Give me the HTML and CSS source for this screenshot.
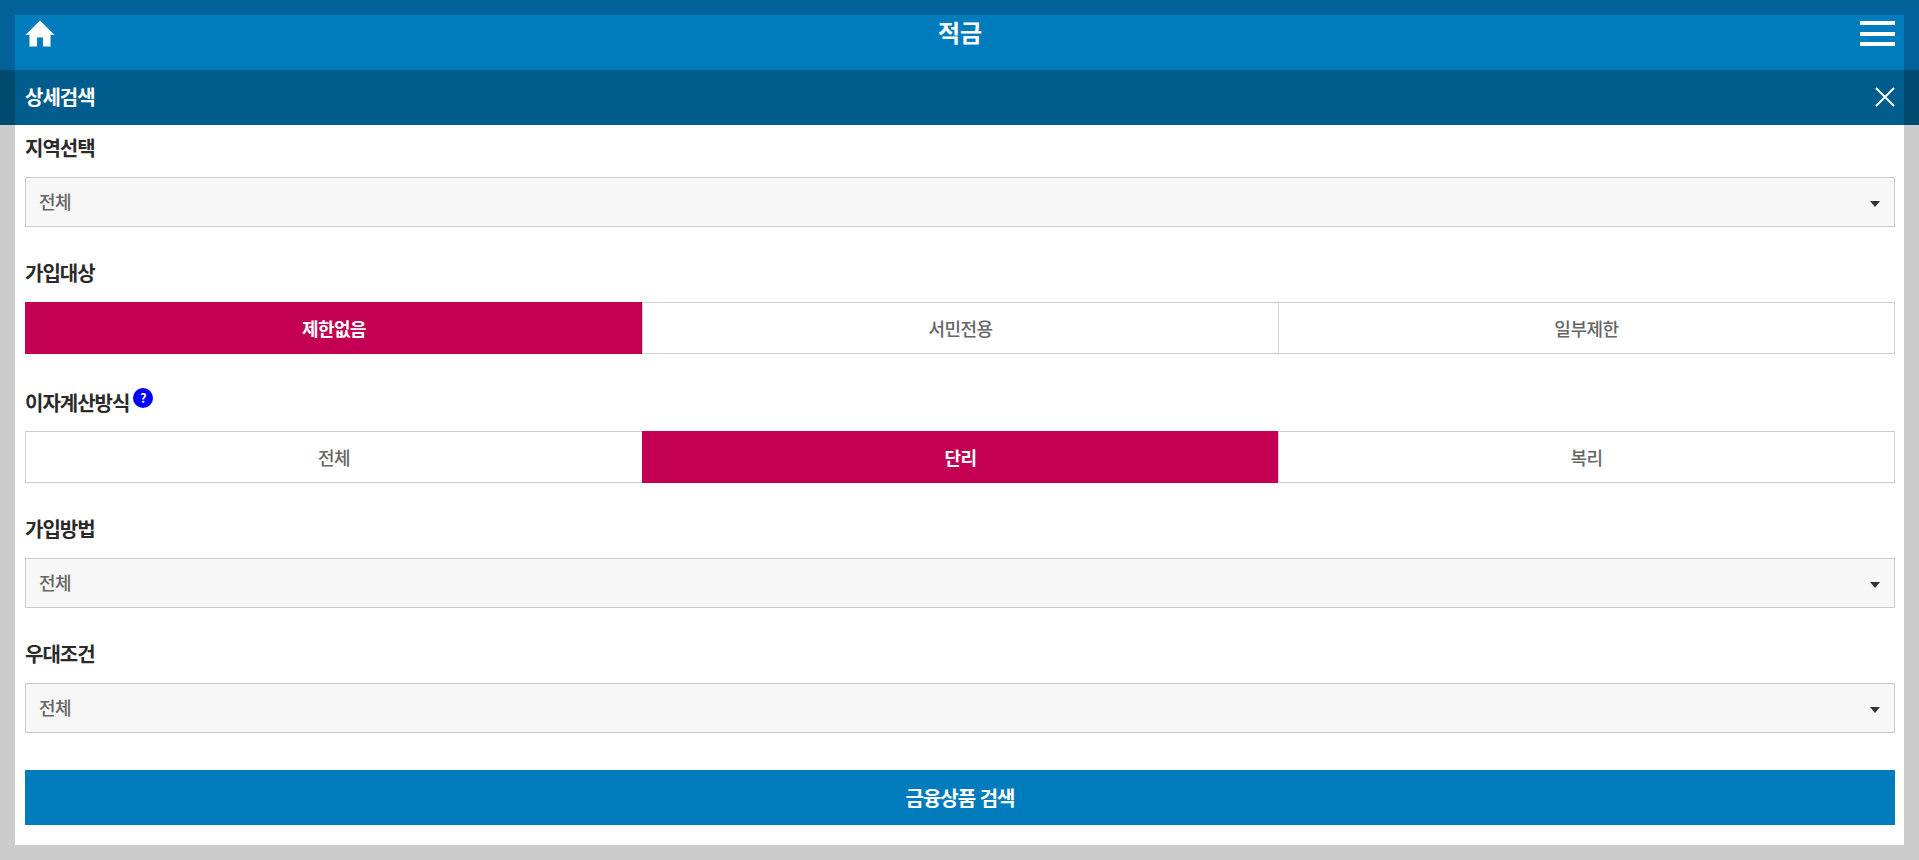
FILE: index.html
```html
<!DOCTYPE html>
<html lang="ko">
<head>
  <meta charset="UTF-8" />
  <meta name="viewport" content="width=device-width, initial-scale=1.0"/>
  <title>적금</title>
  <link rel="stylesheet" href="styles.css">
</head>
<body>

  <!-- HEADER -->
  <div class="top-wrap">
    <div class="top-bar">
      <a href="#" class="home-link" aria-label="홈">
        <svg width="30" height="27" viewBox="0 0 30 27"><path d="M15 0.5L29.5 15H25.5V26.5H18V17.5H12V26.5H4.500V15H0.500Z" fill="#fff"/></svg>
      </a>
      <h1>적금</h1>
      <a href="#" class="menu-link" aria-label="메뉴"><span></span><span></span><span></span></a>
    </div>
  </div>

  <div class="sub-wrap">
    <div class="sub-bar">
      <h2>상세검색</h2>
      <a href="#" class="close-link" aria-label="닫기">
        <svg width="20" height="20" viewBox="0 0 20 20"><path d="M1 1L19 19M19 1L1 19" stroke="#fff" stroke-width="2" fill="none"/></svg>
      </a>
    </div>
  </div>

  <!-- SEARCH FORM -->
  <div class="panel">
    <div class="field">
      <div class="field-title">지역선택</div>
      <div class="select-box"><select><option>전체</option></select></div>
    </div>

    <div class="field">
      <div class="field-title">가입대상</div>
      <div class="toggle">
        <button class="on">제한없음</button>
        <button>서민전용</button>
        <button>일부제한</button>
      </div>
    </div>

    <div class="field">
      <div class="field-title has-help">이자계산방식<span class="help">?</span></div>
      <div class="toggle">
        <button>전체</button>
        <button class="on">단리</button>
        <button>복리</button>
      </div>
    </div>

    <div class="field">
      <div class="field-title">가입방법</div>
      <div class="select-box"><select><option>전체</option></select></div>
    </div>

    <div class="field">
      <div class="field-title">우대조건</div>
      <div class="select-box"><select><option>전체</option></select></div>
    </div>

    <button class="search-btn">금융상품 검색</button>
  </div>

</body>
</html>
```

FILE: styles.css
```css
* {
  box-sizing: border-box;
}

html, body {
  height: 860px;
  overflow: hidden;
}

body {
  margin: 0;
  background: #cccccc;
  font-family: "Noto Sans CJK KR", "Noto Sans", sans-serif;
  color: #222;
}

a {
  color: #fff;
}

/* Header */
.top-wrap {
  background: #006299;
  padding: 15px 15px 0;
}

.top-bar {
  height: 55px;
  background: #007cbd;
  padding: 5px 9px 0 10px;
  display: flex;
  justify-content: space-between;
  align-items: flex-start;
}

.top-bar h1 {
  margin: -1px 0 0;
  font-size: 24px;
  line-height: 26px;
  font-weight: 700;
  color: #fff;
  flex: 1;
  text-align: center;
}

.home-link {
  display: block;
  height: 27px;
  width: 35px;
}

.menu-link {
  display: flex;
  flex-direction: column;
  gap: 6.500px;
  width: 35px;
  margin-top: 1px;
}

.menu-link span {
  display: block;
  height: 4px;
  background: #fff;
}

.sub-wrap {
  background: #004a70;
  padding: 0 15px;
}

.sub-bar {
  height: 55px;
  background: #005c8c;
  padding: 0 9px 2px 10px;
  display: flex;
  justify-content: space-between;
  align-items: center;
}

.sub-bar h2 {
  margin: 0;
  font-size: 20px;
  line-height: 26px;
  font-weight: 700;
  letter-spacing: -1px;
  color: #fff;
}

.close-link {
  display: block;
  height: 20px;
  margin-top: 1px;
}

/* Form */
.panel {
  margin: 0 15px;
  height: 720px;
  background: #fff;
  padding: 11px 9px 20px 10px;
}

.field {
  margin-bottom: 34px;
}

.field-title {
  font-size: 20px;
  line-height: 24px;
  font-weight: 700;
  letter-spacing: -1px;
  color: #2a2a2a;
  margin-bottom: 17px;
}

.has-help {
  height: 26px;
  margin-bottom: 17px;
}

.help {
  display: inline-block;
  width: 20px;
  height: 20px;
  margin-left: 4px;
  border-radius: 50%;
  background: #0000ff;
  color: #fff;
  font-size: 13px;
  line-height: 20px;
  font-weight: 700;
  text-align: center;
  letter-spacing: 0;
  vertical-align: 8px;
}

.select-box {
  position: relative;
}

.select-box::after {
  content: "";
  position: absolute;
  right: 15px;
  top: 24px;
  border-top: 6px solid #333;
  border-left: 5.500px solid transparent;
  border-right: 5.500px solid transparent;
}

.select-box select {
  display: block;
  width: 100%;
  height: 50px;
  padding: 0 13px 2px;
  border: 1px solid #cccccc;
  border-radius: 0;
  background: #f7f7f7;
  font-family: inherit;
  font-size: 18px;
  font-weight: 500;
  color: #666;
  letter-spacing: -0.5px;
  appearance: none;
}

.toggle {
  display: grid;
  grid-template-columns: 33% 1fr 33%;
}

.toggle button {
  height: 52px;
  padding: 0;
  border: 1px solid #cccccc;
  border-right: 0;
  background: #fff;
  font-family: inherit;
  font-size: 18px;
  font-weight: 500;
  color: #666;
  letter-spacing: -0.5px;
}

.toggle button:last-child {
  border-right: 1px solid #cccccc;
}

.toggle button.on {
  background: #c30051;
  border-color: #c30051;
  font-weight: 700;
  color: #fff;
}

.search-btn {
  display: block;
  width: 100%;
  height: 55px;
  margin-top: 37px;
  padding: 0;
  border: 0;
  background: #007cbd;
  font-family: inherit;
  font-size: 20px;
  font-weight: 700;
  color: #fff;
  letter-spacing: -1px;
}
```
